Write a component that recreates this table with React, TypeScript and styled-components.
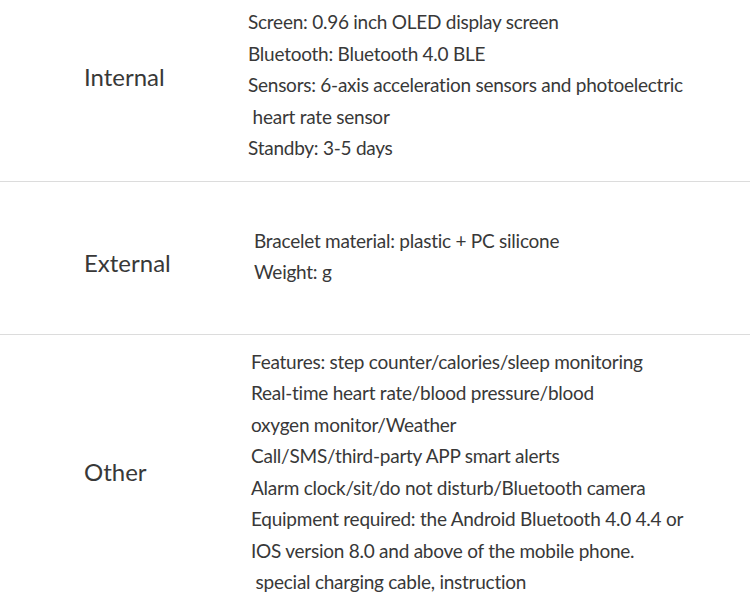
import styled, { createGlobalStyle } from "styled-components";

const GlobalStyle = createGlobalStyle`
  body {
    margin: 0;
    background: #fff;
    font-family: Lato, "Open Sans", sans-serif;
    color: #333;
  }
`;

const Page = styled.div`
  width: 750px;
  height: 614px;
  overflow: hidden;
`;

const Section = styled.section<{ $top: number; $bottom: number; $last?: boolean }>`
  display: flex;
  align-items: center;
  padding: ${(p) => p.$top}px 0 ${(p) => p.$bottom}px;
  border-bottom: ${(p) => (p.$last ? "none" : "1px solid #dcdcdc")};
`;

const Label = styled.div<{ $shift: number }>`
  width: 84px;
  padding-left: 84px;
  flex-shrink: 0;
  font-size: 24px;
  color: #383838;
  transform: translateY(${(p) => p.$shift}px);
`;

const Specs = styled.div<{ $indent: number }>`
  margin-left: ${(p) => p.$indent}px;
`;

const Line = styled.p`
  margin: 0;
  font-size: 19px;
  line-height: 31.5px;
  letter-spacing: -0.25px;
  color: #383838;
  white-space: pre;
`;

type Group = {
  label: string;
  lines: string[];
  top: number;
  bottom: number;
  indent: number;
  shift: number;
};

const groups: Group[] = [
  {
    label: "Internal",
    top: 6,
    bottom: 17,
    indent: 80,
    shift: -8,
    lines: [
      "Screen: 0.96 inch OLED display screen",
      "Bluetooth: Bluetooth 4.0 BLE",
      "Sensors: 6-axis acceleration sensors and photoelectric",
      " heart rate sensor",
      "Standby: 3-5 days",
    ],
  },
  {
    label: "External",
    top: 43,
    bottom: 46,
    indent: 86,
    shift: 6,
    lines: ["Bracelet material: plastic + PC silicone", "Weight: g"],
  },
  {
    label: "Other",
    top: 11,
    bottom: 16,
    indent: 83,
    shift: 0,
    lines: [
      "Features: step counter/calories/sleep monitoring",
      "Real-time heart rate/blood pressure/blood",
      "oxygen monitor/Weather",
      "Call/SMS/third-party APP smart alerts",
      "Alarm clock/sit/do not disturb/Bluetooth camera",
      "Equipment required: the Android Bluetooth 4.0 4.4 or",
      "IOS version 8.0 and above of the mobile phone.",
      " special charging cable, instruction",
    ],
  },
];

export default function App() {
  return (
    <>
      <GlobalStyle />
      <Page>
        {groups.map((g, i) => (
          <Section key={g.label} $top={g.top} $bottom={g.bottom} $last={i === groups.length - 1}>
            <Label $shift={g.shift}>{g.label}</Label>
            <Specs $indent={g.indent}>
              {g.lines.map((l) => (
                <Line key={l}>{l}</Line>
              ))}
            </Specs>
          </Section>
        ))}
      </Page>
    </>
  );
}
